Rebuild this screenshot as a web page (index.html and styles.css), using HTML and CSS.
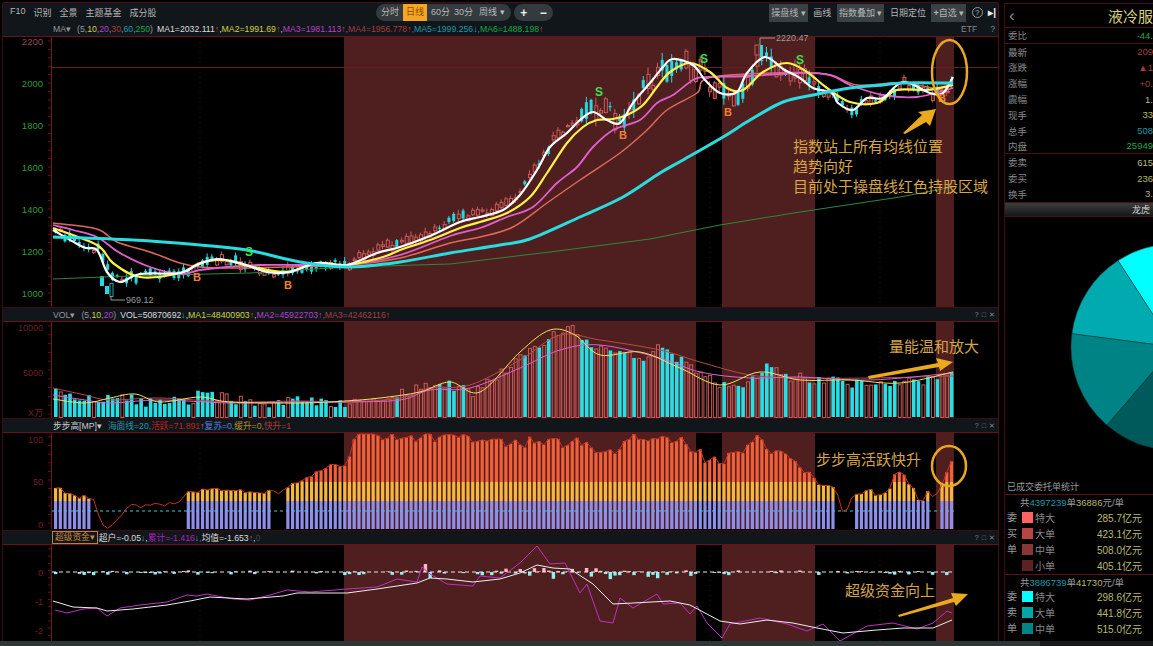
FILE: index.html
```html
<!DOCTYPE html>
<html lang="zh-CN">
<head>
  <meta charset="UTF-8">
  <meta name="viewport" content="width=device-width, initial-scale=1.0">
  <title>液冷服务 日线</title>
  <link rel="stylesheet" href="styles.css">
</head>
<body>
  <div class="app">

    <!-- Left side: toolbar and four chart panels -->
    <div class="left">
      <div class="toolbar">
        <div class="tool-links">
          <span>F10</span><span>识别</span><span>全景</span><span>主题基金</span><span>成分股</span>
        </div>
        <div class="period-pill">
          <span>分时</span><span class="active">日线</span><span>60分</span><span>30分</span><span class="period-more">周线 ▾</span>
        </div>
        <div class="zoom-pill"><span>+</span><span>−</span></div>
        <div class="tool-right">
          <span class="tool-box">操盘线 ▾</span>
          <span>画线</span>
          <span class="tool-box">指数叠加 ▾</span>
          <span>日期定位</span>
          <span class="tool-box"><b>+</b>自选 ▾</span>
          <span class="help-dot">?</span>
          <span class="collapse">▸|</span>
        </div>
      </div>

      <!-- Main K line chart -->
      <div class="legend">
        <span class="c-gray">MA▾</span>
        <span class="legend-params"><span class="c-gray">(5,</span><span class="c-yellow">10</span><span class="c-gray">,</span><span class="c-magenta">20</span><span class="c-gray">,</span><span class="c-red">30</span><span class="c-gray">,</span><span class="c-cyan">60</span><span class="c-gray">,</span><span class="c-green">250</span><span class="c-gray">)</span></span>
        <span class="c-white">MA1=2032.111<span class="c-up">↑</span>,</span><span class="c-yellow">MA2=1991.69<span class="c-up">↑</span>,</span><span class="c-magenta">MA3=1981.113<span class="c-up">↑</span>,</span><span class="c-red">MA4=1956.778<span class="c-up">↑</span>,</span><span class="c-cyan">MA5=1999.256<span class="c-down">↓</span>,</span><span class="c-green">MA6=1488.198<span class="c-up">↑</span></span>
        <span class="legend-tail"><span class="etf">ETF</span><span>?</span></span>
      </div>
      <svg class="chart" id="mainChart" viewBox="3 37 995 270" width="995" height="270">
        <g id="mainLayer"></g>
        <text class="axis-top" x="43" y="45" text-anchor="end">2200</text>
        <text class="axis-green" x="43" y="87" text-anchor="end">2000</text>
        <text class="axis-green" x="43" y="129" text-anchor="end">1800</text>
        <text class="axis-green" x="43" y="171" text-anchor="end">1600</text>
        <text class="axis-green" x="43" y="213" text-anchor="end">1400</text>
        <text class="axis-green" x="43" y="255" text-anchor="end">1200</text>
        <text class="axis-green" x="43" y="297" text-anchor="end">1000</text>

        <path class="peak-line" d="M760 45V38H775"/>
        <text class="peak-text" x="776" y="41">2220.47</text>
        <path class="peak-line" d="M111 296V300H125"/>
        <text class="peak-text" x="126" y="303">969.12</text>

        <text class="sig-s" x="245" y="256">S</text>
        <text class="sig-s" x="595" y="96">S</text>
        <text class="sig-s" x="700" y="63">S</text>
        <text class="sig-s" x="796" y="64">S</text>
        <text class="sig-b" x="193" y="281">B</text>
        <text class="sig-b" x="284" y="289">B</text>
        <text class="sig-b" x="619" y="139">B</text>
        <text class="sig-b" x="724" y="116">B</text>
        <text class="sig-b" x="938" y="102">B</text>

        <ellipse class="note-ring" cx="949.5" cy="72" rx="17.5" ry="32"/>
        <polygon class="note-arrow" points="903,133 922,115 918,112 936,109 930,126 926,122 905,134"/>
        <text class="note" x="793" y="152">指数站上所有均线位置</text>
        <text class="note" x="793" y="172">趋势向好</text>
        <text class="note" x="793" y="192">目前处于操盘线红色持股区域</text>
      </svg>

      <!-- Volume -->
      <div class="legend panel-head">
        <span class="c-gray">VOL▾</span>
        <span class="legend-params"><span class="c-gray">(5,</span><span class="c-yellow">10</span><span class="c-gray">,</span><span class="c-magenta">20</span><span class="c-gray">)</span></span>
        <span class="c-white">VOL=50870692<span class="c-down">↓</span>,</span><span class="c-yellow">MA1=48400903<span class="c-up">↑</span>,</span><span class="c-magenta">MA2=45922703<span class="c-up">↑</span>,</span><span class="c-red">MA3=42462116<span class="c-up">↑</span></span>
        <span class="legend-tail panel-btns"><span>?</span><span>□</span><span>✕</span></span>
      </div>
      <svg class="chart" id="volChart" viewBox="3 322 995 96" width="995" height="96">
        <g id="volLayer"></g>
        <text class="axis-red" x="43" y="331" text-anchor="end">10000</text>
        <text class="axis-red" x="43" y="376" text-anchor="end">5000</text>
        <text class="axis-red" x="43" y="416" text-anchor="end">X万</text>
        <polygon class="note-arrow" points="868,376 938,363 936,358 953,362 940,371 939,367 869,379"/>
        <text class="note" x="889" y="352">量能温和放大</text>
      </svg>

      <!-- Step indicator -->
      <div class="legend panel-head">
        <span class="c-light">步步高[MP]▾</span>
        <span class="step-vals"><span class="c-cyan">海面线=20,</span><span class="c-scarlet">活跃=71.891<span class="c-gray">↑</span></span><span class="c-blue">复苏=0,</span><span class="c-gold">缓升=0,</span><span class="c-red">快升=1</span></span>
        <span class="legend-tail panel-btns"><span>?</span><span>□</span><span>✕</span></span>
      </div>
      <svg class="chart" id="stepChart" viewBox="3 433 995 97" width="995" height="97">
        <g id="stepLayer"></g>
        <text class="axis-red" x="43" y="443" text-anchor="end">100</text>
        <text class="axis-red" x="43" y="485" text-anchor="end">50</text>
        <text class="axis-red" x="43" y="528" text-anchor="end">0</text>
        <ellipse class="note-ring" cx="949" cy="466" rx="17" ry="20"/>
        <text class="note" x="816" y="465">步步高活跃快升</text>
      </svg>

      <!-- Super funds -->
      <div class="legend panel-head">
        <span class="fund-tag">超级资金▾</span>
        <span class="c-white">超户=-0.05<span class="c-down">↓</span>,</span><span class="c-violet">累计=-1.416<span class="c-down">↓</span>,</span><span class="c-white">均值=-1.653<span class="c-up">↑</span>,</span><span class="c-dim">0</span>
        <span class="legend-tail panel-btns"><span>?</span><span>□</span><span>✕</span></span>
      </div>
      <svg class="chart" id="fundChart" viewBox="3 544 995 97" width="995" height="97">
        <g id="fundLayer"></g>
        <text class="axis-red" x="43" y="575" text-anchor="end">0</text>
        <text class="axis-red" x="43" y="604" text-anchor="end">-1</text>
        <text class="axis-red" x="43" y="633" text-anchor="end">-2</text>
        <polygon class="note-arrow" points="898,614 953,597 951,592 968,593 956,605 954,601 899,616"/>
        <text class="note" x="845" y="595">超级资金向上</text>
      </svg>
    </div>

    <!-- Right side: quote panel -->
    <div class="side">
      <div class="side-title"><span class="back">‹</span><span class="stock-name">液冷服</span></div>
      <div class="stat stat-line"><span>委比</span><span class="c-green">-44.</span></div>
      <div class="stat"><span>最新</span><span class="c-red">209</span></div>
      <div class="stat"><span>涨跌</span><span class="c-red">▲1</span></div>
      <div class="stat"><span>涨幅</span><span class="c-red">+0.</span></div>
      <div class="stat"><span>震幅</span><span class="c-pale">1.</span></div>
      <div class="stat"><span>现手</span><span class="c-pale">33</span></div>
      <div class="stat"><span>总手</span><span class="c-cyan">508</span></div>
      <div class="stat stat-line"><span>内盘</span><span class="c-green">25949</span></div>
      <div class="stat"><span>委卖</span><span class="c-pale">615</span></div>
      <div class="stat"><span>委买</span><span class="c-pale">236</span></div>
      <div class="stat"><span>换手</span><span class="c-pale">3.</span></div>
      <div class="rank-bar">龙虎</div>
      <svg class="pie" viewBox="1005 217 148 263" width="148" height="263">
        <path class="slice-1" d="M1174 347L1118 260.600A103 103 0 0 1 1174 244Z"/>
        <path class="slice-2" d="M1174 347L1071.900 333.700A103 103 0 0 1 1118 260.600Z"/>
        <path class="slice-3" d="M1174 347L1107 425.200A103 103 0 0 1 1071.900 333.700Z"/>
        <path class="slice-4" d="M1174 347L1174 450A103 103 0 0 1 1107 425.200Z"/>
      </svg>
      <div class="order-caption">已成交委托单统计</div>

      <div class="order-sum">共<span class="c-cyan">4397239</span>单<span class="c-pale">36886</span>元/单</div>
      <div class="order-block order-buy">
        <div class="order-side"><span>委</span><span>买</span><span>单</span></div>
        <div class="order-rows">
          <div class="order-row"><i class="swatch buy-1"></i><span>特大</span><em>285.7<u>亿元</u></em></div>
          <div class="order-row"><i class="swatch buy-2"></i><span>大单</span><em>423.1<u>亿元</u></em></div>
          <div class="order-row"><i class="swatch buy-3"></i><span>中单</span><em>508.0<u>亿元</u></em></div>
          <div class="order-row"><i class="swatch buy-4"></i><span>小单</span><em>405.1<u>亿元</u></em></div>
        </div>
      </div>

      <div class="order-sum order-sum-sell">共<span class="c-cyan">3886739</span>单<span class="c-pale">41730</span>元/单</div>
      <div class="order-block">
        <div class="order-side"><span>委</span><span>卖</span><span>单</span></div>
        <div class="order-rows">
          <div class="order-row"><i class="swatch sell-1"></i><span>特大</span><em>298.6<u>亿元</u></em></div>
          <div class="order-row"><i class="swatch sell-2"></i><span>大单</span><em>441.8<u>亿元</u></em></div>
          <div class="order-row"><i class="swatch sell-3"></i><span>中单</span><em>515.0<u>亿元</u></em></div>
        </div>
      </div>
    </div>
  </div>
  <div class="bottom-strip"></div>

  <script src="chart.js"></script>
</body>
</html>
```

FILE: styles.css
```css
* {
  box-sizing: border-box;
}
html, body {
  margin: 0;
  height: 646px;
  overflow: hidden;
}
body {
  background-color: #000;
  color: #aaa;
  font-family: "Liberation Sans", "Noto Sans CJK SC", sans-serif;
  font-size: 9px;
}
.app {
  display: flex;
  height: 641px;
  padding-top: 3px;
}

/* Left column */
.left {
  width: 995px;
  margin-left: 3px;
  box-shadow: -1px 0 #3c0c10, 1px 0 #4c1014, 0 -1px #4c1014;
}
.toolbar {
  display: flex;
  align-items: center;
  height: 19px;
  padding-left: 7px;
  background-color: #10161a;
  white-space: nowrap;
}
.tool-links {
  display: flex;
  width: 366px;
  gap: 8px;
  color: #b4b4b4;
}
.period-pill,
.zoom-pill {
  display: flex;
  align-items: center;
  height: 17px;
  border-radius: 9px;
  background-color: #343b3e;
  color: #b8b8b8;
}
.period-pill {
  width: 135px;
  gap: 4px;
  padding-left: 5px;
}
.period-pill span {
  line-height: 17px;
}
.period-pill .active {
  padding: 0 3px;
  background-color: #f5a623;
  color: #8a4a00;
}
.period-pill .period-more {
  margin-left: 2px;
}
.zoom-pill {
  justify-content: space-around;
  width: 39px;
  margin-left: 3px;
  color: #eee;
  font-size: 12px;
  font-weight: bold;
}
.tool-right {
  display: flex;
  align-items: center;
  gap: 5.500px;
  margin-left: auto;
  padding-right: 2px;
  color: #b4b4b4;
}
.tool-box {
  height: 18px;
  padding: 0 2px;
  line-height: 18px;
  background-color: #3a4144;
}
.help-dot {
  width: 11px;
  height: 11px;
  border: 1px solid #999;
  border-radius: 50%;
  text-align: center;
  line-height: 9px;
  font-size: 8px;
}
.collapse {
  color: #eee;
  font-weight: bold;
  font-size: 10px;
}
.legend {
  display: flex;
  align-items: center;
  height: 15px;
  padding-left: 50px;
  background-color: #10161a;
  border-bottom: 1px solid #6a1216;
  white-space: nowrap;
  font-size: 8.700px;
}
.panel-head {
  height: 15px;
  border-top: 1px solid #3c0c10;
}
.legend-params {
  margin: 0 4px 0 6px;
}
.legend-tail {
  display: flex;
  gap: 13px;
  margin-left: auto;
  padding-right: 3px;
  color: #888;
}
.etf {
  font-size: 8.500px;
}
.panel-btns {
  gap: 3px;
  font-size: 7px;
}
.step-vals {
  margin-left: 6px;
}
.fund-tag {
  height: 13px;
  margin: 0 1px 0 -1px;
  padding: 0 2px;
  line-height: 11px;
  border: 1px solid #b9804a;
  color: #d08a3a;
}
.c-white { color: #ddd; }
.c-light { color: #ccc; }
.c-gray { color: #999; }
.c-dim { color: #444; }
.c-up { color: #c04a4a; }
.c-down { color: #20b8c8; }
.c-yellow { color: #d0d040; }
.c-magenta { color: #b640c8; }
.c-violet { color: #b020c0; }
.c-red { color: #a83c3c; }
.c-scarlet { color: #c02020; }
.c-cyan { color: #2098a8; }
.c-green { color: #1ca848; }
.c-blue { color: #5a80e0; }
.c-gold { color: #b09030; }
.c-pale { color: #b8b870; }

/* Chart svg */
.chart {
  display: block;
  overflow: visible;
  font-family: "Liberation Sans", "Noto Sans CJK SC", sans-serif;
}
.axis-green {
  fill: #2f9a3a;
  font-size: 9.500px;
}
.axis-top {
  fill: #8a4a50;
  font-size: 9.500px;
}
.axis-red {
  fill: #6e2020;
  font-size: 9px;
}
.peak-line {
  fill: none;
  stroke: #999;
  stroke-width: 1;
}
.peak-text {
  fill: #999;
  font-size: 9px;
}
.sig-s {
  fill: #3ce04a;
  font-size: 12px;
  font-weight: bold;
}
.sig-b {
  fill: #f08030;
  font-size: 11px;
  font-weight: bold;
}
.note {
  fill: #d6a548;
  font-size: 15px;
}
.note-ring {
  fill: none;
  stroke: #e8a820;
  stroke-width: 2.500;
}
.note-arrow {
  fill: #eba91e;
}

/* Right column */
.side {
  width: 148px;
  margin-left: 7px;
  overflow: hidden;
  box-shadow: -1px 0 #3c0c10;
}
.side-title {
  position: relative;
  display: flex;
  align-items: center;
  height: 25px;
  border-top: 1px solid #4c1014;
  border-bottom: 1px solid #4c1014;
}
.back {
  margin-left: 4px;
  color: #888;
  font-size: 17px;
  line-height: 17px;
}
.stock-name {
  position: absolute;
  left: 103px;
  color: #d8d080;
  font-size: 15px;
  white-space: nowrap;
}
.stat {
  display: flex;
  justify-content: space-between;
  align-items: center;
  height: 15.800px;
  padding-left: 3px;
  color: #888;
  font-size: 9.500px;
  white-space: nowrap;
}
.stat-line {
  border-bottom: 1px solid #4c1014;
}
.rank-bar {
  height: 15px;
  padding-left: 127px;
  line-height: 15px;
  border-top: 1px solid #4c1014;
  border-bottom: 1px solid #4c1014;
  background: linear-gradient(#3a3e3e, #141818);
  color: #ddd;
  font-size: 9px;
  white-space: nowrap;
}
.pie {
  display: block;
}
.slice-1 { fill: #00ffff; }
.slice-2 { fill: #00abaf; }
.slice-3 { fill: #008385; }
.slice-4 { fill: #005a5c; }
.slice-1, .slice-2, .slice-3, .slice-4 {
  stroke: #0a3a3a;
  stroke-width: 0.500;
}
.order-caption {
  height: 15px;
  padding-left: 2px;
  line-height: 15px;
  border-bottom: 1px solid #5a1216;
  color: #9a9a9a;
  font-size: 9px;
}
.order-sum {
  height: 15px;
  padding-left: 15px;
  line-height: 15px;
  color: #9a9a9a;
  font-size: 9.500px;
  white-space: nowrap;
}
.order-sum-sell {
  height: 14px;
}
.order-block {
  display: flex;
}
.order-buy {
  border-bottom: 1px solid #5a1216;
}
.order-side {
  display: flex;
  flex-direction: column;
  width: 17px;
  padding-left: 2px;
  color: #999;
  font-size: 10px;
}
.order-side span {
  height: 16px;
  line-height: 16px;
}
.order-rows {
  flex: 1;
}
.order-row {
  display: flex;
  align-items: center;
  height: 16px;
  padding-right: 11px;
  color: #888;
  font-size: 10px;
}
.order-row em {
  margin-left: auto;
  color: #b8b870;
  font-style: normal;
}
.order-row u {
  text-decoration: none;
}
.swatch {
  width: 11px;
  height: 11px;
  margin-right: 2px;
}
.buy-1 { background-color: #ff6262; }
.buy-2 { background-color: #b84444; }
.buy-3 { background-color: #883636; }
.buy-4 { background-color: #5a2222; }
.sell-1 { background-color: #00ffff; }
.sell-2 { background-color: #00a8a8; }
.sell-3 { background-color: #008484; }
.bottom-strip {
  height: 5px;
  background: linear-gradient(90deg, #2c3735 1040px, #141818 1040px);
}
```

FILE: chart.js
```js
// Draws the K line and indicator panels. Coordinates are page pixels,
// every svg uses a viewBox that matches its place on the page.
const SVG_NS = "http://www.w3.org/2000/svg";
const BANDS = [[344, 696], [722, 815], [936, 954]];
const BAR_COUNT = 190;
const BAR_STEP = 4.74;
const barX = i => 54 + i * BAR_STEP;

let seed = 20240517;
function rand() {
  seed = (seed * 1664525 + 1013904223) % 4294967296;
  return seed / 4294967296;
}

function add(layer, tag, attrs) {
  const el = document.createElementNS(SVG_NS, tag);
  for (const key in attrs) el.setAttribute(key, attrs[key]);
  layer.appendChild(el);
  return el;
}

function rect(layer, x, y, w, h, fill, stroke) {
  add(layer, "rect", { x, y, width: w, height: h, fill: fill, stroke: stroke || "none" });
}

// value of a polyline at x
function lineAt(points, x) {
  if (x <= points[0][0]) return points[0][1];
  for (let i = 1; i < points.length; i++) {
    if (x <= points[i][0]) {
      const a = points[i - 1], b = points[i];
      return a[1] + (b[1] - a[1]) * (x - a[0]) / (b[0] - a[0]);
    }
  }
  return points[points.length - 1][1];
}

// catmull-rom through the points
function smoothPath(p) {
  let d = `M${p[0][0]} ${p[0][1]}`;
  for (let i = 0; i < p.length - 1; i++) {
    const p0 = p[i - 1] || p[i], p1 = p[i], p2 = p[i + 1], p3 = p[i + 2] || p2;
    const c1x = p1[0] + (p2[0] - p0[0]) / 6, c1y = p1[1] + (p2[1] - p0[1]) / 6;
    const c2x = p2[0] - (p3[0] - p1[0]) / 6, c2y = p2[1] - (p3[1] - p1[1]) / 6;
    d += `C${c1x} ${c1y} ${c2x} ${c2y} ${p2[0]} ${p2[1]}`;
  }
  return d;
}

function drawLine(layer, points, color, width, straight) {
  const d = straight
    ? "M" + points.map(p => p[0] + " " + p[1]).join("L")
    : smoothPath(points);
  add(layer, "path", { d, fill: "none", stroke: color, "stroke-width": width, "stroke-linejoin": "round" });
}

function drawFrame(layer, top, bottom, tickStep) {
  BANDS.forEach(b => rect(layer, b[0], top, b[1] - b[0], bottom - top, "#4f1f1f"));
  add(layer, "line", { x1: 51.5, x2: 51.5, y1: top, y2: bottom, stroke: "#7a1020" });
  for (let y = top + 4; y < bottom; y += tickStep) {
    add(layer, "line", { x1: 48, x2: 51, y1: y, y2: y, stroke: "#6a1018" });
  }
  // faint grid
  for (let x = 200; x < 990; x += 170) {
    add(layer, "line", { x1: x, x2: x, y1: top, y2: bottom, stroke: "#5a1a1a", "stroke-dasharray": "1 4", "stroke-width": 0.6 });
  }
}

/* ---------- main chart ---------- */
const MA1 = [[53,230],[83,247],[97,250],[107,272],[120,282],[140,274],[180,273],[197,265],[217,259],[240,263],[267,272],[290,272],[317,263],[347,265],[377,253],[400,247],[430,236],[460,222],[480,217],[503,210],[520,195],[537,170],[550,147],[567,133],[580,120],[593,112],[607,120],[620,123],[633,103],[650,83],[663,67],[673,59],[693,65],[705,80],[720,93],[737,92],[747,73],[765,57],[783,69],[800,78],[813,88],[832,93],[838,103],[853,110],[867,98],[883,98],[903,82],[930,93],[943,93],[953,77]];
const MA2 = [[53,228],[97,245],[113,263],[140,277],[180,273],[200,263],[223,260],[253,267],[287,272],[317,263],[347,265],[383,257],[400,250],[430,240],[460,228],[480,222],[507,213],[530,197],[547,173],[567,143],[583,127],[597,120],[613,119],[627,115],[643,105],[657,87],[670,72],[690,63],[710,72],[727,88],[743,90],[763,72],[787,63],[807,72],[827,88],[850,102],[877,103],[897,90],[927,90],[953,85]];
const MA3 = [[53,225],[73,230],[97,237],[120,253],[150,267],[180,274],[200,270],[227,267],[260,265],[300,265],[347,265],[400,255],[450,236],[480,228],[507,217],[533,207],[557,183],[577,167],[593,147],[613,130],[640,120],[657,103],[673,95],[693,80],[707,77],[750,76],[797,73],[830,75],[850,85],[883,95],[917,97],[953,88]];
const MA4 = [[53,223],[97,229],[117,242],[150,252],[180,263],[200,267],[233,268],[283,267],[347,265],[400,258],[450,243],[480,237],[513,227],[547,203],[580,180],[620,153],[647,130],[667,110],[697,93],[713,77],[817,73],[857,85],[903,83],[950,92]];
const MA5 = [[53,237],[133,240],[200,245],[247,250],[300,262],[347,267],[400,262],[450,253],[500,245],[530,239],[580,217],[623,197],[660,173],[683,160],[723,137],[750,120],[783,102],[813,95],[850,88],[883,85],[903,83],[953,83]];
const MA6 = [[53,279],[130,276],[250,273],[347,267],[450,264],[550,252],[650,239],[720,225],[800,212],[900,197],[953,187]];

const isDown = [];

function drawMain() {
  const layer = document.getElementById("mainLayer");
  drawFrame(layer, 37, 307, 8.4);
  add(layer, "line", { x1: 52, x2: 998, y1: 67.500, y2: 67.500, stroke: "#6a1a20" });

  for (let i = 0; i < BAR_COUNT; i++) {
    const x = barX(i);
    const late = x > 580 && x < 815;
    const rising = x > 350 && x < 650;
    const mid = lineAt(MA1, x) - (rising ? 5 : 0);
    const close = mid + (rand() - 0.5) * (late ? 18 : 7);
    const bodyH = 1 + rand() * (late ? 16 : 7);
    const down = x < 344 ? rand() < 0.7 : rand() < (x > 580 ? 0.42 : 0.18);
    isDown.push(down);
    const top = close - bodyH / 2;
    const wick = 1 + rand() * (late ? 7 : 3);
    const color = down ? "#26d8e0" : "#c85a5a";
    add(layer, "line", { x1: x + 1.500, x2: x + 1.500, y1: top - wick, y2: top + bodyH + wick, stroke: color, "stroke-width": 1 });
    if (down) rect(layer, x, top, 3, bodyH, color);
    else rect(layer, x + 0.500, top + 0.500, 3, bodyH, x >= 344 ? "#4f1f1f" : "#000", color);
  }
  // the low and the high are not random
  rect(layer, 100, 276, 4, 10, "#26d8e0");
  rect(layer, 105, 286, 4, 8, "#26d8e0");
  rect(layer, 110, 283.500, 3, 13, "#000", "#26a8b0");
  rect(layer, 755, 45, 4, 10, "#4f1f1f", "#c85a5a");
  rect(layer, 760, 45, 3, 12, "#26d8e0");

  drawLine(layer, MA6, "#2a8a3a", 1, true);
  drawLine(layer, MA4, "#e0685a", 1.500);
  drawLine(layer, MA3, "#e060d0", 1.800);
  drawLine(layer, MA2, "#fff04a", 2.200);
  drawLine(layer, MA1, "#ffffff", 2.200);
  drawLine(layer, MA5, "#28dce0", 3);
}

/* ---------- volume ---------- */
const VOL_TOP = [[53,390],[100,400],[115,393],[140,400],[190,398],[200,390],[220,395],[260,402],[285,398],[345,402],[360,397],[385,395],[420,385],[440,380],[470,390],[500,370],[520,355],[540,340],[570,325],[590,345],[610,350],[640,355],[660,345],[690,365],[720,385],[745,385],[765,365],[790,375],[830,378],[870,385],[900,378],[935,378],[953,372]];
const VOL_MA3 = [[53,388],[85,395],[110,400],[160,398],[230,402],[300,401],[345,402],[400,398],[430,388],[470,385],[520,360],[560,335],[600,340],[660,350],[700,362],[750,375],[800,378],[870,378],[953,376]];
const VOL_MA2 = [[53,395],[85,400],[110,403],[160,400],[230,403],[300,402],[345,402],[400,400],[430,390],[470,388],[520,368],[560,350],[600,345],[660,358],[700,372],[750,378],[800,377],[870,380],[953,373]];
const VOL_MA1 = [[53,399],[85,403],[110,398],[135,394],[160,402],[200,397],[230,402],[300,403],[345,401],[380,398],[420,392],[450,382],[480,392],[520,352],[550,330],[575,335],[600,355],[640,352],[680,368],[720,385],[760,372],[800,380],[850,380],[900,383],[953,372]];

function drawVolume() {
  const layer = document.getElementById("volLayer");
  drawFrame(layer, 322, 418, 8.800);
  const base = 417;
  for (let i = 0; i < BAR_COUNT; i++) {
    const x = barX(i);
    const top = lineAt(VOL_TOP, x) + rand() * 10 - 3;
    if (isDown[i]) rect(layer, x, top, 3.600, base - top, "#26e0e8");
    else rect(layer, x + 0.500, top + 0.500, 3, base - top, "none", "#c85a5a");
  }
  drawLine(layer, VOL_MA3, "#b84a4a", 1);
  drawLine(layer, VOL_MA2, "#e060d0", 1);
  drawLine(layer, VOL_MA1, "#f0e060", 1);
}

/* ---------- step indicator ---------- */
const STEP_TOP = [[53,486],[58,487],[63,494],[88,498],[92,500],[100,523],[104,529],[110,526],[120,517],[128,503],[140,507],[150,503],[165,505],[181,500],[187,492],[200,491],[210,490],[225,491],[240,490],[258,494],[270,490],[275,497],[283,490],[290,483],[300,481],[310,476],[320,470],[330,464],[335,466],[343,467],[350,450],[355,440],[360,436],[375,434],[500,440],[590,445],[613,453],[623,435],[683,443],[697,452],[703,462],[713,457],[720,467],[727,453],[740,453],[757,435],[767,452],[783,452],[797,465],[800,475],[810,473],[815,483],[835,490],[840,510],[847,508],[852,495],[863,493],[870,487],[875,498],[887,493],[895,470],[903,477],[905,487],[910,485],[917,500],[921,502],[924,485],[928,498],[937,493],[943,475],[948,465],[953,460]];
const STEP_RUNS = [[53, 88], [182, 270], [283, 835], [851, 917], [921, 928], [937, 955]];

function drawStep() {
  const layer = document.getElementById("stepLayer");
  drawFrame(layer, 433, 529, 8.600);
  const tops = [];
  for (let i = 0; i < BAR_COUNT; i++) {
    const x = barX(i);
    const busy = x > 350 && x < 700;
    const top = Math.max(434, lineAt(STEP_TOP, x) + (rand() - 0.5) * (busy ? 13 : 4));
    tops.push([x + 1.600, top]);
    if (!STEP_RUNS.some(r => x >= r[0] && x < r[1])) continue;
    rect(layer, x, 501, 3.200, 28, "#8f8ee8");
    if (top < 501) rect(layer, x, Math.max(top, 482), 3.200, 501 - Math.max(top, 482), "#f5b83c");
    if (top < 482) rect(layer, x, top, 3.200, 482 - top, "#f2603a");
  }
  add(layer, "line", { x1: 52, x2: 954, y1: 511, y2: 511, stroke: "#40c8d0", "stroke-dasharray": "3 3" });
  drawLine(layer, tops, "#c8321e", 1, true);
}

/* ---------- super funds ---------- */
const FUND_AVG = [[53,600],[73,606],[97,607],[107,610],[133,608],[167,604],[190,600],[210,596],[247,598],[283,595],[297,592],[347,592],[377,588],[417,582],[430,577],[447,578],[473,581],[500,578],[520,572],[537,564],[553,567],[570,568],[593,583],[613,603],[633,602],[670,600],[690,604],[720,620],[740,623],[767,619],[793,622],[817,627],[843,632],[877,629],[903,627],[933,627],[952,619]];
const FUND_SUM = [[55,609],[67,612],[83,608],[97,607],[107,615],[120,607],[140,604],[167,601],[187,594],[197,595],[207,593],[233,598],[250,599],[270,594],[287,589],[310,591],[347,588],[377,586],[397,578],[417,581],[422,566],[430,573],[447,583],[473,585],[480,575],[500,577],[520,562],[537,545],[550,563],[565,562],[580,592],[587,583],[600,620],[613,622],[620,597],[633,607],[657,593],[663,603],[680,602],[690,613],[697,605],[707,622],[722,637],[730,623],[760,617],[787,623],[807,630],[823,623],[840,640],[867,625],[893,622],[917,628],[933,622],[947,610],[952,612]];
const FUND_BARS = { 422: -8, 427: 6, 537: -9, 520: -3, 565: 8, 568: 6, 590: -5, 592: 7, 584: -4 };

function drawFund() {
  const layer = document.getElementById("fundLayer");
  drawFrame(layer, 544, 640, 7.200);
  for (let i = 0; i < BAR_COUNT; i++) {
    const x = barX(i);
    let h = rand() < 0.55 ? (rand() - 0.35) * 5 : 0;
    for (const k in FUND_BARS) {
      if (Math.abs(k - x) < 2.400) h = FUND_BARS[k];
    }
    if (x > 500 && x < 700 && rand() < 0.5) h = (rand() - 0.4) * 12;
    if (Math.abs(h) < 0.5) continue;
    if (h < 0) rect(layer, x, 571 + h, 3.400, -h, "#ffb8c8");
    else rect(layer, x, 571, 3.400, h, "#90f0f4");
  }
  add(layer, "line", { x1: 52, x2: 954, y1: 571, y2: 571, stroke: "#e8e8e8", "stroke-dasharray": "4 3" });
  drawLine(layer, FUND_SUM, "#c030c0", 1, true);
  drawLine(layer, FUND_AVG, "#eee", 1, true);
}

drawMain();
drawVolume();
drawStep();
drawFund();
```
